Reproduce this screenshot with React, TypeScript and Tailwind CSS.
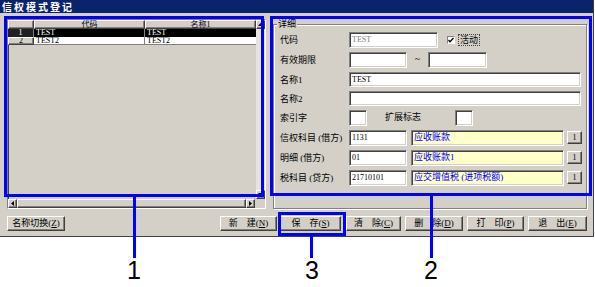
import React from "react";

const FONT = "font-['Liberation_Serif','Noto_Sans_CJK_SC',serif]";
const sunken =
  "bg-white border border-t-[#808080] border-l-[#808080] border-b-white border-r-white shadow-[inset_1px_1px_0_#404040,inset_-1px_-1px_0_#d4d0c8]";
const raised =
  "bg-[#d4d0c8] border border-t-white border-l-white border-b-[#404040] border-r-[#404040] shadow-[inset_-1px_-1px_0_#808080]";

function Label({ children, w = "w-[69px]" }: { children: React.ReactNode; w?: string }) {
  return <div className={`${w} shrink-0 text-[9px] leading-[16px] text-black`}>{children}</div>;
}

function Field({ w, h = "h-[16px]", children, gray }: { w: string; h?: string; children?: React.ReactNode; gray?: boolean }) {
  return (
    <div className={`${sunken} ${w} ${h} shrink-0 px-[2px] text-[8px] leading-[13px] ${gray ? "text-[#808080]" : "text-black"}`}>
      {children}
    </div>
  );
}

function Yellow({ children }: { children: React.ReactNode }) {
  return (
    <div className="ml-[4px] w-[153px] h-[16px] shrink-0 bg-[#ffffc8] border border-t-[#808080] border-l-[#808080] border-b-white border-r-white shadow-[inset_1px_1px_0_#404040,inset_-1px_-1px_0_#d4d0c8] px-[2px] text-[9px] leading-[13px] text-[#0000ff]">
      {children}
    </div>
  );
}

function OneBtn() {
  return (
    <div className={`${raised} ml-[3px] mt-[1px] w-[15px] h-[13px] shrink-0 text-[8px] leading-[11px] text-center text-black`}>1</div>
  );
}

function U({ c }: { c: string }) {
  return <span className="underline">{c}</span>;
}

function HeaderCell({ w, children }: { w: string; children?: React.ReactNode }) {
  return (
    <div className={`${raised} ${w} h-[9px] shrink-0 text-[8px] leading-[7px] text-center text-black`}>{children}</div>
  );
}

export default function App() {
  const buttons: { t: string; k: string; cls: string }[] = [
    { t: "新　建", k: "N", cls: "w-[57px] ml-[155px]" },
    { t: "保　存", k: "S", cls: "w-[61px] ml-[3px]" },
    { t: "清　除", k: "C", cls: "w-[55px] ml-[5px]" },
    { t: "删　除", k: "D", cls: "w-[58px] ml-[4px]" },
    { t: "打　印", k: "P", cls: "w-[57px] ml-[4px]" },
    { t: "退　出", k: "E", cls: "w-[59px] ml-[4px]" },
  ];

  const cellBase = "h-[8px] overflow-hidden text-[8px] leading-[8px] pl-[2px]";

  return (
    <div className={`relative w-[595px] h-[287px] bg-white overflow-hidden ${FONT}`}>
      {/* window */}
      <div className="w-[594px] h-[237px] bg-[#d4d0c8] border-r border-b border-[#404040] flex flex-col">
        <div className="h-[13px] shrink-0 bg-[#0a246a] text-white text-[10px] font-bold leading-[13px] pl-[2px] tracking-[2px] font-['Noto_Sans_CJK_SC',sans-serif]">
          信权模式登记
        </div>

        <div className="flex pt-[6px] pl-[7px]">
          {/* grid */}
          <div className={`${sunken} !bg-[#d4d0c8] w-[259px] h-[190px] flex flex-col`}>
            <div className="flex flex-1 min-h-0">
              <div className="flex flex-col w-[248px]">
                <div className="flex">
                  <HeaderCell w="w-[26px]" />
                  <HeaderCell w="w-[111px]">代码</HeaderCell>
                  <HeaderCell w="w-[111px]">名称1</HeaderCell>
                </div>
                <div className="flex h-[8px]">
                  <div className="w-[26px] h-[8px] overflow-hidden bg-[#202020] border-r border-[#808080] text-white text-[8px] leading-[8px] text-center">1</div>
                  <div className={`${cellBase} w-[111px] bg-black text-white border-r border-[#808080]`}>TEST</div>
                  <div className={`${cellBase} w-[111px] bg-black text-white`}>TEST</div>
                </div>
                <div className="flex h-[8px]">
                  <div className={`${raised} w-[26px] h-[8px] overflow-hidden text-[8px] leading-[6px] text-center text-black`}>2</div>
                  <div className={`${cellBase} w-[111px] bg-white text-black border-r border-b border-[#808080]`}>TEST2</div>
                  <div className={`${cellBase} w-[111px] bg-white text-black border-b border-[#808080]`}>TEST2</div>
                </div>
              </div>
              {/* vertical scrollbar */}
              <div className="ml-auto w-[9px] flex flex-col bg-[#e6e4de]">
                <div className={`${raised} h-[9px] w-[9px] flex items-center justify-center`}>
                  <svg width="5" height="3" viewBox="0 0 5 3"><path d="M2.5 0 L5 3 L0 3Z" fill="#000" /></svg>
                </div>
                <div className="flex-1" />
                <div className={`${raised} h-[9px] w-[9px] flex items-center justify-center`}>
                  <svg width="5" height="3" viewBox="0 0 5 3"><path d="M0 0 L5 0 L2.5 3Z" fill="#000" /></svg>
                </div>
              </div>
            </div>
            {/* horizontal scrollbar */}
            <div className="flex h-[9px] shrink-0">
              <div className={`${raised} w-[9px] h-[9px] flex items-center justify-center`}>
                <svg width="3" height="5" viewBox="0 0 3 5"><path d="M0 2.5 L3 0 L3 5Z" fill="#000" /></svg>
              </div>
              <div className={`${raised} w-[229px] h-[9px]`} />
              <div className={`${raised} w-[9px] h-[9px] flex items-center justify-center`}>
                <svg width="3" height="5" viewBox="0 0 3 5"><path d="M0 0 L3 2.5 L0 5Z" fill="#000" /></svg>
              </div>
              <div className="flex-1 bg-[#d4d0c8]" />
            </div>
          </div>

          {/* detail group box */}
          <div className="relative ml-[7px] mt-[5px] w-[314px] h-[185px] border border-[#808080] shadow-[inset_1px_1px_0_#fff,1px_1px_0_#fff] pt-[7px] pl-[6px]">
            <div className="absolute -top-[6px] left-[3px] bg-[#d4d0c8] px-[1px] text-[9px] leading-[10px] text-black">详细</div>

            <div className="flex h-[20px]">
              <Label>代码</Label>
              <Field w="w-[89px]" gray>TEST</Field>
              <div className="ml-[9px] mt-[4px] w-[8px] h-[8px] bg-white border border-t-[#808080] border-l-[#808080] border-b-white border-r-white flex items-center justify-center">
                <svg width="6" height="6" viewBox="0 0 6 6"><path d="M0.5 3 L2 4.7 L5.5 1" stroke="#000" strokeWidth="1.3" fill="none" /></svg>
              </div>
              <div className="ml-[3px] mt-[2px] h-[12px] px-[1px] border border-dotted border-[#404040] text-[9px] leading-[10px] text-black">活动</div>
            </div>

            <div className="flex h-[20px]">
              <Label>有效期限</Label>
              <Field w="w-[58px]" />
              <div className="w-[21px] text-center text-[10px] leading-[14px] text-black">~</div>
              <Field w="w-[59px]" />
            </div>

            <div className="flex h-[19px]">
              <Label>名称1</Label>
              <Field w="w-[232px]" h="h-[15px]">TEST</Field>
            </div>

            <div className="flex h-[19px]">
              <Label>名称2</Label>
              <Field w="w-[232px]" h="h-[15px]" />
            </div>

            <div className="flex h-[20px]">
              <Label>索引字</Label>
              <Field w="w-[18px]" />
              <div className="ml-[18px] w-[70px] text-[9px] leading-[14px] text-black">扩展标志</div>
              <Field w="w-[18px]" />
            </div>

            <div className="flex h-[20px]">
              <Label>信权科目 (借方)</Label>
              <Field w="w-[58px]">1131</Field>
              <Yellow>应收账款</Yellow>
              <OneBtn />
            </div>

            <div className="flex h-[20px]">
              <Label>明细 (借方)</Label>
              <Field w="w-[58px]">01</Field>
              <Yellow>应收账款1</Yellow>
              <OneBtn />
            </div>

            <div className="flex h-[20px]">
              <Label>税科目 (贷方)</Label>
              <Field w="w-[58px]">21710101</Field>
              <Yellow>应交增值税 (进项税额)</Yellow>
              <OneBtn />
            </div>
          </div>
        </div>

        {/* buttons */}
        <div className="flex mt-[7px] pl-[7px]">
          <div className={`${raised} w-[58px] h-[15px] text-[9px] leading-[13px] text-center text-black`}>
            名称切换(<U c="Z" />)
          </div>
          {buttons.map((b) => (
            <div key={b.k} className={`${raised} ${b.cls} h-[15px] text-[9px] leading-[13px] text-center text-black`}>
              {b.t}(<U c={b.k} />)
            </div>
          ))}
        </div>
      </div>

      {/* annotation overlays */}
      <div className="absolute left-[4px] top-[16px] w-[260px] h-[181px] border-[3px] border-[#0000ff]" />
      <div className="absolute left-[270px] top-[16px] w-[322px] h-[180px] border-[3px] border-[#0000ff]" />
      <div className="absolute left-[278px] top-[212px] w-[68px] h-[24px] border-[3px] border-[#0000ff]" />

      <div className="absolute left-[133px] top-[196px] w-[3px] h-[62px] bg-[#0000ff]" />
      <div className="absolute left-[310px] top-[235px] w-[3px] h-[23px] bg-[#0000ff]" />
      <div className="absolute left-[430px] top-[195px] w-[3px] h-[63px] bg-[#0000ff]" />

      <div className="absolute left-[114px] top-[256px] w-[40px] text-center text-[25px] leading-[28px] text-black font-['Liberation_Sans',sans-serif]">1</div>
      <div className="absolute left-[292px] top-[256px] w-[40px] text-center text-[25px] leading-[28px] text-black font-['Liberation_Sans',sans-serif]">3</div>
      <div className="absolute left-[411px] top-[256px] w-[40px] text-center text-[25px] leading-[28px] text-black font-['Liberation_Sans',sans-serif]">2</div>
    </div>
  );
}
